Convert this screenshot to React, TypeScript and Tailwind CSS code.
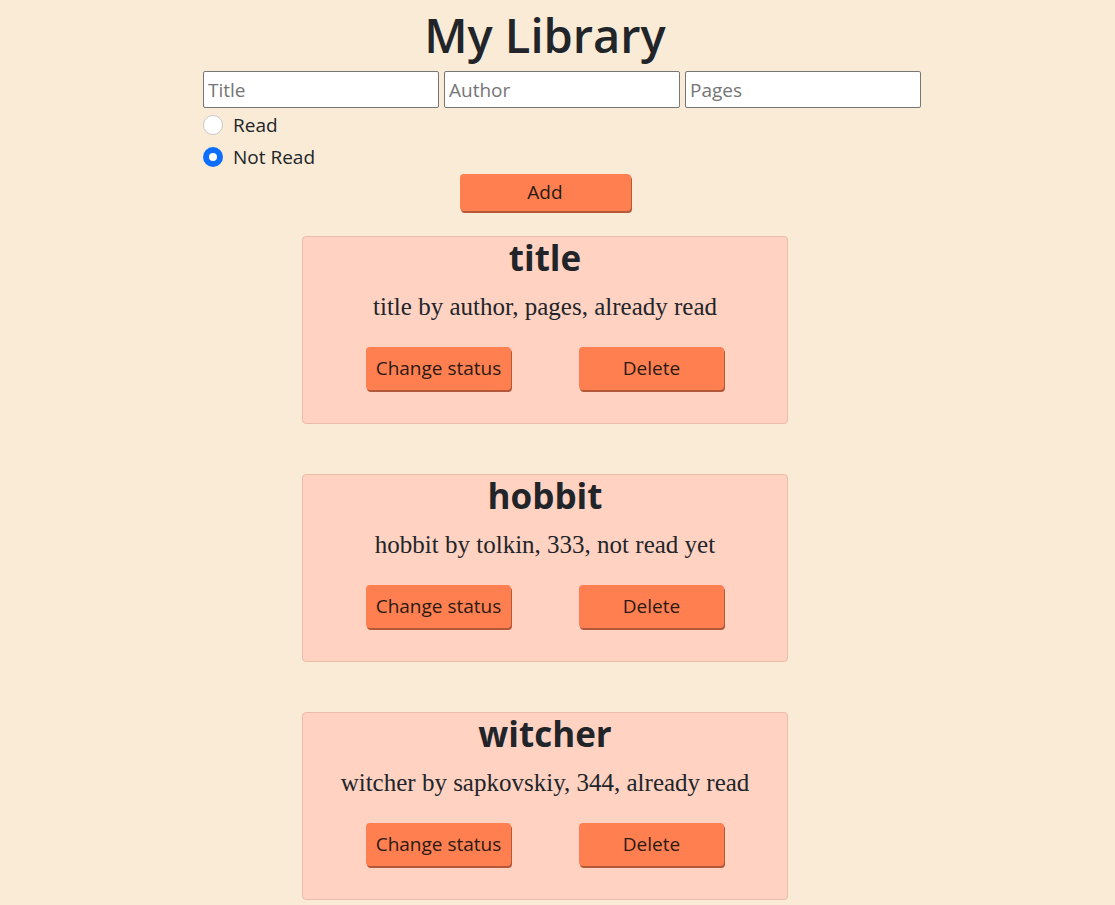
const books = [
  { title: "title", author: "author", pages: "pages", read: true },
  { title: "hobbit", author: "tolkin", pages: "333", read: false },
  { title: "witcher", author: "sapkovskiy", pages: "344", read: true },
];

const sans = "font-['Segoe_UI','Open_Sans','Noto_Sans',sans-serif]";

const BookCard = ({ title, author, pages, read }: (typeof books)[number]) => {
  return (
    <section className="w-[486px] h-[188px] rounded-[4px] border border-[#ebbcaa] bg-[#ffd2c2] flex flex-col items-center">
      <h2 className={`${sans} text-[35px] leading-[42px] font-bold text-[#212529]`}>
        {title}
      </h2>
      <p className="font-['Liberation_Serif',serif] text-[25px] leading-[28px] text-[#212529] mt-[14px]">
        {title} by {author}, {pages}, {read ? "already read" : "not read yet"}
      </p>
      <div className="flex gap-[68px] mt-[26px]">
        <button className={`${sans} w-[145px] h-[43px] rounded-[4px] bg-[#ff7f50] text-[19px] text-[#2a1a14] shadow-[1px_2px_0_#b4583a]`}>
          Change status
        </button>
        <button className={`${sans} w-[145px] h-[43px] rounded-[4px] bg-[#ff7f50] text-[19px] text-[#2a1a14] shadow-[1px_2px_0_#b4583a]`}>
          Delete
        </button>
      </div>
    </section>
  );
};

export default function App() {
  return (
    <div className={`${sans} min-h-[905px] bg-[#faebd7] text-[#212529]`}>
      <div className="w-[1090px] flex flex-col items-center">
        <h1 className="text-[47px] leading-[68px] font-semibold mt-[1px]">My Library</h1>
        <form className="w-full flex flex-col mt-[2px]">
          <div className="pl-[203px] flex gap-[5px]">
            {["Title", "Author", "Pages"].map((p) => (
              <input
                key={p}
                placeholder={p}
                className="w-[236px] h-[37px] bg-white border border-[#767676] rounded-[2px] px-[4px] text-[19px] placeholder:text-[#757575] outline-none"
              />
            ))}
          </div>
          <label className="pl-[203px] flex items-center h-[32px] mt-[1px] text-[19px]">
            <span className="w-[20px] h-[20px] rounded-full border border-[#c8c8c8] bg-white" />
            <span className="ml-[10px]">Read</span>
          </label>
          <label className="pl-[203px] flex items-center h-[32px] text-[19px]">
            <span className="w-[20px] h-[20px] rounded-full bg-[#0d6efd] flex items-center justify-center">
              <span className="w-[8px] h-[8px] rounded-full bg-white" />
            </span>
            <span className="ml-[10px]">Not Read</span>
          </label>
          <button
            type="button"
            className="self-center w-[171px] h-[37px] mt-[1px] rounded-[4px] bg-[#ff7f50] text-[19px] text-[#2a1a14] shadow-[1px_2px_0_#b4583a]"
          >
            Add
          </button>
        </form>
        <div className="flex flex-col gap-[50px] mt-[25px]">
          {books.map((b) => (
            <BookCard key={b.title} {...b} />
          ))}
        </div>
      </div>
    </div>
  );
}
